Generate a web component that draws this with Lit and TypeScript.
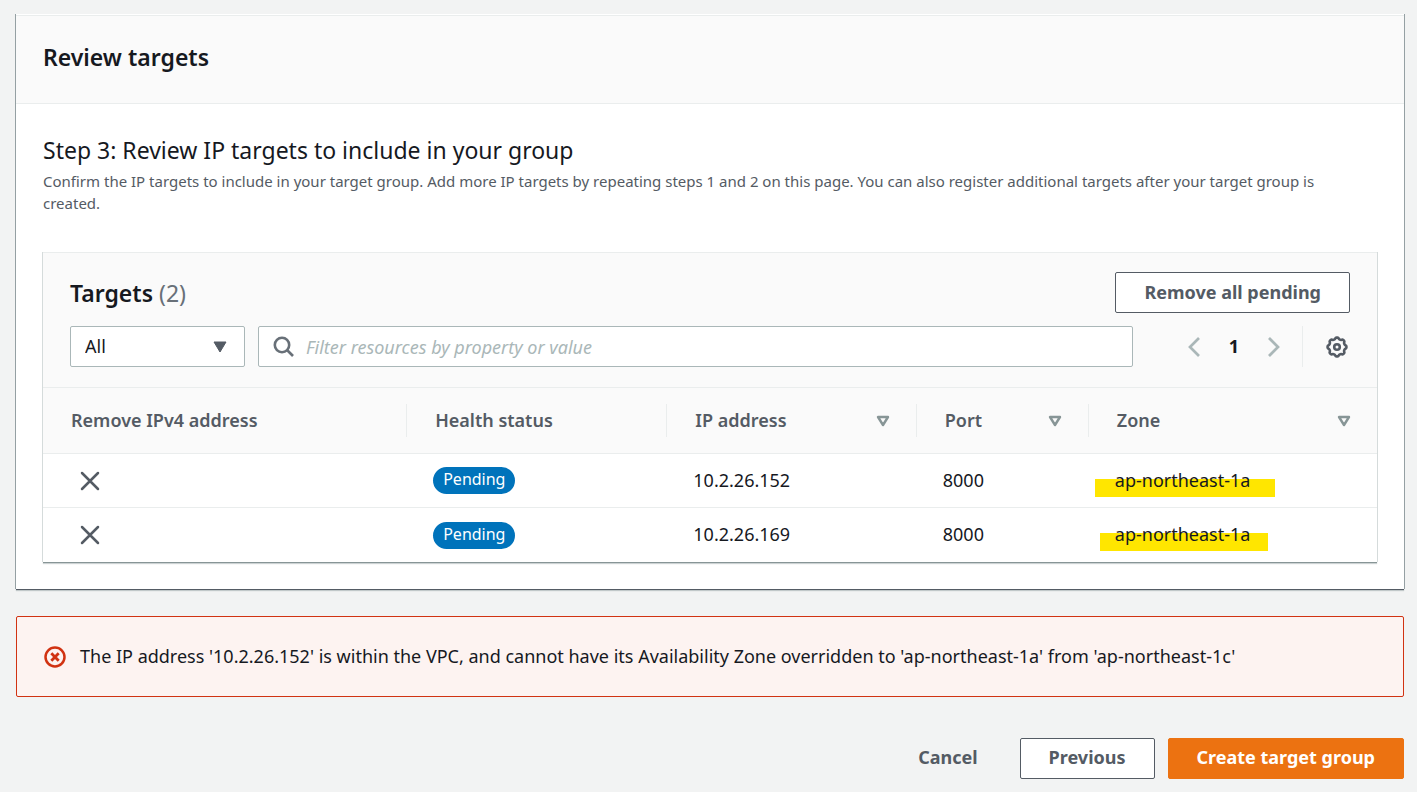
import { LitElement, html, css, svg } from "lit";
import { customElement, state } from "lit/decorators.js";

interface Target {
  ip: string;
  port: number;
  zone: string;
  mark: string;
}

const sortIcon = html`<svg class="sort" viewBox="0 0 14 12" aria-hidden="true">
  <path d="M2 2h10L7 10z" fill="none" stroke="currentColor" stroke-width="2.4" stroke-linejoin="round" />
</svg>`;

const gearPath = (() => {
  const points: string[] = [];
  const steps = 96;
  for (let i = 0; i < steps; i++) {
    const a = (i / steps) * Math.PI * 2;
    const r = 8.7 + 0.75 * Math.tanh(2 * Math.cos(a * 8));
    points.push(`${(11 + r * Math.cos(a)).toFixed(2)} ${(11 + r * Math.sin(a)).toFixed(2)}`);
  }
  return `M${points.join("L")}Z`;
})();

@customElement("app-root")
export class AppRoot extends LitElement {
  static styles = css`
    :host {
      display: block;
      box-sizing: border-box;
      min-height: 100vh;
      padding: 14px 13px 14px 16px;
      background: #f2f3f3;
      color: #16191f;
      font-family: "Noto Sans", "Open Sans", sans-serif;
      font-size: 18px;
      line-height: 28px;
    }
    *, *::before, *::after { box-sizing: border-box; }
    h1, h2, h3, p { margin: 0; }
    button, input, select { font: inherit; color: inherit; }
    button { cursor: pointer; }
    svg { display: block; flex: none; }

    .card {
      background: #fff;
      border-top: 1px solid #fff;
      box-shadow: 0 1px 0 #545b64, 1px 0 0 #95a0a3, -1px 0 0 #95a0a3, 0 2px 1px #001c2433;
    }
    .card-head {
      padding: 27px 27px 32px;
      background: #fafafa;
      border-top: 1px solid #eaeded;
      border-bottom: 1px solid #eaeded;
    }
    .title { font-size: 23px; line-height: 28px; font-weight: 600; }
    .card-body { padding: 31px 27px 27px; }
    .step { font-size: 23px; line-height: 30px; font-weight: 400; }
    .hint { margin-top: 5px; padding-right: 40px; font-size: 15px; line-height: 22px; color: #545b64; }

    .panel {
      margin-top: 38px;
      background: #fff;
      border-top: 1px solid #eaeded;
      box-shadow: 0 1px 0 #879596, 1px 0 0 #d5dbdb, -1px 0 0 #d5dbdb, 0 2px 1px #001c2433;
    }
    .tools { padding: 19px 27px 20px; background: #fafafa; border-bottom: 1px solid #eaeded; }
    .row { display: flex; align-items: center; }
    .between { justify-content: space-between; }
    .count { color: #687078; font-weight: 400; }

    .btn {
      height: 41px;
      padding: 0 28px 2px;
      border: 1px solid #545b64;
      border-radius: 2px;
      background: #fff;
      color: #545b64;
      font-weight: 700;
      white-space: nowrap;
    }
    .btn.primary { background: #ec7211; border-color: #ec7211; color: #fff; }
    .btn.plain { background: none; border-color: transparent; }

    .filters { margin-top: 13px; }
    .pick { position: relative; width: 175px; flex: none; }
    .pick select {
      appearance: none;
      display: block;
      width: 100%;
      height: 41px;
      padding: 0 40px 2px 14px;
      border: 1px solid #aab7b8;
      border-radius: 2px;
      background: #fff;
    }
    .caret { position: absolute; right: 18px; top: 15px; width: 14px; height: 12px; color: #545b64; pointer-events: none; }
    .search {
      display: flex;
      align-items: center;
      flex: 1;
      min-width: 0;
      height: 41px;
      margin-left: 13px;
      padding: 0 14px;
      gap: 12px;
      border: 1px solid #aab7b8;
      border-radius: 2px;
      background: #fff;
      color: #687078;
    }
    .search svg { width: 21px; height: 21px; }
    .search input { flex: 1; min-width: 0; padding: 0; border: 0; outline: 0; background: none; color: #16191f; }
    .search input::placeholder { color: #aab7b8; font-style: italic; opacity: 1; }

    .pager { margin-left: 51px; }
    .icon { display: flex; align-items: center; justify-content: center; padding: 0; border: 0; background: none; color: #545b64; }
    .pager .icon { width: 20px; height: 28px; color: #aab7b8; }
    .pager svg { width: 12px; height: 20px; }
    .page { width: 60px; padding-bottom: 2px; text-align: center; font-weight: 700; }
    .prefs { height: 41px; margin-left: 18px; padding-left: 21px; border-left: 1px solid #eaeded; }
    .prefs svg { width: 22px; height: 22px; }
    .prefs .icon { width: 26px; }

    table { width: 100%; border-collapse: collapse; table-layout: fixed; }
    th { padding: 16px 0; background: #fafafa; text-align: left; font-weight: 600; color: #545b64; }
    .c1 { width: 27.3%; }
    .c2 { width: 19.5%; }
    .c3 { width: 18.7%; }
    .c4 { width: 12.9%; }
    .cell { display: flex; align-items: center; justify-content: space-between; height: 33px; padding: 0 26px 2px 28px; border-right: 1px solid #eaeded; white-space: nowrap; }
    th:last-child .cell { border-right: 0; }
    .sort { width: 14px; height: 12px; color: #879596; margin-top: 2px; }
    td { height: 54px; padding: 0 0 2px 26px; border-top: 1px solid #eaeded; white-space: nowrap; }
    .remove { width: 42px; height: 28px; }
    .remove svg { width: 20px; height: 20px; margin-top: 2px; }
    .badge {
      display: inline-block;
      height: 27px;
      padding: 0 10px;
      border-radius: 14px;
      background: #0073bb;
      color: #fff;
      font-size: 16px;
      line-height: 25px;
      vertical-align: middle;
    }
    .mark {
      display: inline-block;
      height: 34px;
      padding-top: 3px;
      vertical-align: middle;
      color: inherit;
      background: linear-gradient(transparent 16px, #ffe600 16px);
    }
    .wide { margin-left: -20px; padding-left: 20px; padding-right: 25px; }
    .narrow { margin-left: -15px; padding-left: 15px; padding-right: 18px; }

    .alert {
      display: flex;
      align-items: center;
      gap: 14px;
      margin-top: 27px;
      padding: 25px 27px 26px;
      border: 1px solid #d13212;
      border-radius: 2px;
      background: #fdf3f1;
    }
    .alert svg { width: 22px; height: 22px; color: #d13212; margin-top: 2px; }
    .actions { display: flex; justify-content: flex-end; gap: 13px; margin-top: 41px; }
  `;

  @state() private targets: Target[] = [
    { ip: "10.2.26.152", port: 8000, zone: "ap-northeast-1a", mark: "wide" },
    { ip: "10.2.26.169", port: 8000, zone: "ap-northeast-1a", mark: "narrow" },
  ];

  private header(label: string, cls: string, sortable: boolean) {
    return html`<th class=${cls} scope="col"><div class="cell"><span>${label}</span>${sortable ? sortIcon : ""}</div></th>`;
  }

  render() {
    return html`
      <section class="card">
        <header class="card-head"><h1 class="title">Review targets</h1></header>
        <div class="card-body">
          <h2 class="step">Step 3: Review IP targets to include in your group</h2>
          <p class="hint">Confirm the IP targets to include in your target group. Add more IP targets by repeating steps 1 and 2 on this page. You can also register additional targets after your target group is created.</p>

          <div class="panel">
            <div class="tools">
              <div class="row between">
                <h3 class="title">Targets <span class="count">(${this.targets.length})</span></h3>
                <button class="btn" type="button">Remove all pending</button>
              </div>
              <div class="row filters">
                <div class="pick">
                  <select aria-label="Target status"><option>All</option></select>
                  <svg class="caret" viewBox="0 0 14 12" aria-hidden="true">
                    <path d="M1 1h12L7 11z" fill="currentColor" stroke="currentColor" stroke-linejoin="round" />
                  </svg>
                </div>
                <label class="search">
                  <svg viewBox="0 0 21 21" fill="none" stroke="currentColor" stroke-width="2.6" aria-hidden="true">
                    <circle cx="9" cy="9" r="7.2" />
                    <path d="M14 14l6 6" />
                  </svg>
                  <input type="text" aria-label="Filter resources" placeholder="Filter resources by property or value" />
                </label>
                <nav class="row pager" aria-label="Pages">
                  <button class="icon" type="button" aria-label="Previous page">
                    <svg viewBox="0 0 12 20" fill="none" stroke="currentColor" stroke-width="2.7"><path d="M11 1L2 10l9 9" /></svg>
                  </button>
                  <span class="page">1</span>
                  <button class="icon" type="button" aria-label="Next page">
                    <svg viewBox="0 0 12 20" fill="none" stroke="currentColor" stroke-width="2.7"><path d="M1 1l9 9-9 9" /></svg>
                  </button>
                </nav>
                <div class="row prefs">
                  <button class="icon" type="button" aria-label="Preferences">
                    <svg viewBox="0 0 22 22" fill="none" stroke="currentColor" stroke-width="2.6" stroke-linejoin="round">
                      ${svg`<path d=${gearPath} />`}
                      <circle cx="11" cy="11" r="2.8" />
                    </svg>
                  </button>
                </div>
              </div>
            </div>

            <table>
              <thead>
                <tr>
                  ${this.header("Remove IPv4 address", "c1", false)}
                  ${this.header("Health status", "c2", false)}
                  ${this.header("IP address", "c3", true)}
                  ${this.header("Port", "c4", true)}
                  ${this.header("Zone", "", true)}
                </tr>
              </thead>
              <tbody>
                ${this.targets.map(
                  (t) => html`<tr>
                    <td>
                      <button class="icon remove" type="button" aria-label="Remove ${t.ip}">
                        <svg viewBox="0 0 20 20" fill="none" stroke="currentColor" stroke-width="2.5" stroke-linecap="round"><path d="M2 2l16 16M18 2L2 18" /></svg>
                      </button>
                    </td>
                    <td><span class="badge">Pending</span></td>
                    <td>${t.ip}</td>
                    <td>${t.port}</td>
                    <td><mark class="mark ${t.mark}">${t.zone}</mark></td>
                  </tr>`
                )}
              </tbody>
            </table>
          </div>
        </div>
      </section>

      <div class="alert" role="alert">
        <svg viewBox="0 0 22 22" fill="none" stroke="currentColor" stroke-width="2.5" aria-hidden="true">
          <circle cx="11" cy="11" r="9.5" />
          <path d="M7.3 7.3l7.4 7.4M14.7 7.3l-7.4 7.4" stroke-width="2.8" />
        </svg>
        <span>The IP address '10.2.26.152' is within the VPC, and cannot have its Availability Zone overridden to 'ap-northeast-1a' from 'ap-northeast-1c'</span>
      </div>

      <div class="actions">
        <button class="btn plain" type="button">Cancel</button>
        <button class="btn" type="button">Previous</button>
        <button class="btn primary" type="button">Create target group</button>
      </div>
    `;
  }
}
